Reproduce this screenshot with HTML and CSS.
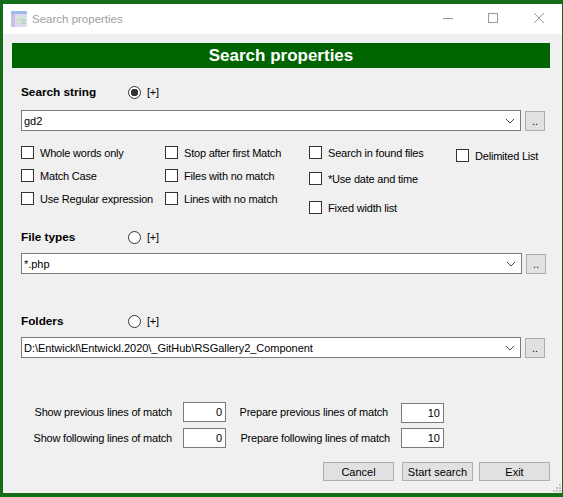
FILE: index.html
```html
<!DOCTYPE html>
<html lang="en">

<head>
    <meta charset="UTF-8">
    <meta name="viewport" content="width=device-width, initial-scale=1.0">
    <title>Search properties</title>
    <link rel="stylesheet" href="styles.css">
</head>

<body>
    <div class="window">
        <!-- Title bar -->
        <header class="titlebar">
            <svg class="app-icon" width="16" height="16" viewBox="0 0 16 16">
                <rect x="0" y="0" width="16" height="16" fill="#dedbf0" />
                <rect x="0" y="0" width="16" height="3" fill="#9dbde6" />
                <rect x="0" y="3" width="4" height="13" fill="#c6c2e6" />
                <rect x="5" y="5" width="10" height="2" fill="#d4e6d8" />
                <rect x="5" y="8" width="4" height="2" fill="#c4e0c4" />
                <rect x="10" y="8" width="5" height="2" fill="#b4dab8" />
                <rect x="5" y="11" width="4" height="2" fill="#cde5cd" />
                <rect x="10" y="11" width="5" height="2" fill="#b4dab8" />
            </svg>
            <span class="window-title">Search properties</span>
            <div class="window-controls">
                <svg class="ctl-min" width="10" height="10" viewBox="0 0 10 10"><path d="M0 5.5h10" stroke="#9a9a9a" fill="none" /></svg>
                <svg class="ctl-max" width="10" height="10" viewBox="0 0 10 10"><rect x=".5" y=".5" width="9" height="9" stroke="#9a9a9a" fill="none" /></svg>
                <svg width="10" height="10" viewBox="0 0 10 10"><path d="M0 0l10 10M10 0L0 10" stroke="#9a9a9a" fill="none" /></svg>
            </div>
        </header>

        <main class="form">
            <h1 class="banner">Search properties</h1>

            <!-- Search string -->
            <div class="section-head head-search">
                <span class="section-label">Search string</span>
                <span class="radio radio-on"></span>
                <span class="plus">[+]</span>
            </div>
            <div class="combo-row row-search">
                <div class="combo"><span>gd2</span><svg class="chevron" width="10" height="6" viewBox="0 0 10 6"><path d="M1 1l4 4 4-4" stroke="#444" fill="none" /></svg></div>
                <button class="dots" type="button">..</button>
            </div>

            <div class="options">
                <div class="option-col col-one">
                    <label class="check"><span class="box"></span>Whole words only</label>
                    <label class="check"><span class="box"></span>Match Case</label>
                    <label class="check"><span class="box"></span>Use Regular expression</label>
                </div>
                <div class="option-col col-two">
                    <label class="check"><span class="box"></span>Stop after first Match</label>
                    <label class="check"><span class="box"></span>Files with no match</label>
                    <label class="check"><span class="box"></span>Lines with no match</label>
                </div>
                <div class="option-col col-three">
                    <label class="check"><span class="box"></span>Search in found files</label>
                    <label class="check"><span class="box"></span>*Use date and time</label>
                    <label class="check"><span class="box"></span>Fixed width list</label>
                </div>
                <div class="option-col col-four">
                    <label class="check"><span class="box"></span>Delimited List</label>
                </div>
            </div>

            <!-- File types -->
            <div class="section-head head-types">
                <span class="section-label">File types</span>
                <span class="radio"></span>
                <span class="plus">[+]</span>
            </div>
            <div class="combo-row">
                <div class="combo combo-wide"><span>*.php</span><svg class="chevron" width="10" height="6" viewBox="0 0 10 6"><path d="M1 1l4 4 4-4" stroke="#444" fill="none" /></svg></div>
                <button class="dots" type="button">..</button>
            </div>

            <!-- Folders -->
            <div class="section-head head-folders">
                <span class="section-label">Folders</span>
                <span class="radio"></span>
                <span class="plus">[+]</span>
            </div>
            <div class="combo-row">
                <div class="combo"><span>D:\Entwickl\Entwickl.2020\_GitHub\RSGallery2_Component</span><svg class="chevron" width="10" height="6" viewBox="0 0 10 6"><path d="M1 1l4 4 4-4" stroke="#444" fill="none" /></svg></div>
                <button class="dots" type="button">..</button>
            </div>

            <!-- Context lines -->
            <div class="lines">
                <span class="line-label label-show">Show previous lines of match</span>
                <span class="num">0</span>
                <span class="line-label label-prev">Prepare previous lines of match</span>
                <span class="num num-low">10</span>
                <span class="line-label label-show">Show following lines of match</span>
                <span class="num">0</span>
                <span class="line-label label-next">Prepare following lines of match</span>
                <span class="num">10</span>
            </div>

            <div class="actions">
                <button class="action" type="button">Cancel</button>
                <button class="action" type="button">Start search</button>
                <button class="action" type="button">Exit</button>
            </div>
        </main>

        <svg class="grip" width="9" height="9" viewBox="0 0 9 9">
            <path d="M6 0h2v2H6zM3 3h2v2H3zM6 3h2v2H6zM0 6h2v2H0zM3 6h2v2H3zM6 6h2v2H6z" fill="#c4c4c4" />
        </svg>
    </div>
</body>

</html>
```

FILE: styles.css
```css
* {
    box-sizing: border-box;
}

body {
    margin: 0;
    font-family: "Liberation Sans", Arial, sans-serif;
    font-size: 11px;
    letter-spacing: -0.2px;
    color: #000;
    background-color: #136d17;
}

.window {
    position: relative;
    width: 563px;
    height: 497px;
    border-style: solid;
    border-color: #136d17;
    border-width: 4px 1px 4px 3px;
    background-color: #f0f0f0;
    overflow: hidden;
}

.titlebar {
    display: flex;
    align-items: center;
    height: 30px;
    padding-left: 8px;
    background-color: #fff;
}

.app-icon {
    margin-right: 5px;
}

.window-title {
    font-size: 11.5px;
    letter-spacing: 0;
    color: #a0a0a0;
}

.window-controls {
    display: flex;
    margin-left: auto;
    margin-right: 18px;
    margin-bottom: 2px;
}

.ctl-min {
    margin-right: 35px;
}

.ctl-max {
    margin-right: 36px;
}

.form {
    padding: 9px 12px 0 9px;
}

.banner {
    height: 25px;
    margin: 0;
    line-height: 25px;
    text-align: center;
    font-size: 17px;
    font-weight: bold;
    letter-spacing: 0;
    color: #fff;
    background-color: #006400;
}

.section-head {
    display: flex;
    align-items: center;
    height: 16px;
    padding-left: 9px;
}

.head-search {
    margin-top: 16px;
}

.head-types {
    margin-top: 15px;
}

.head-folders {
    margin-top: 39px;
}

.section-label {
    width: 107px;
    font-size: 11.8px;
    font-weight: bold;
    letter-spacing: -0.02px;
}

.radio {
    width: 13px;
    height: 13px;
    margin-right: 6px;
    border: 1px solid #333;
    border-radius: 50%;
    background-color: #fff;
}

.radio-on {
    background: radial-gradient(circle, #333 0 3.5px, #fff 4px);
}

.combo-row {
    display: flex;
    align-items: flex-start;
    margin-top: 8px;
    padding-left: 9px;
}

.row-search {
    margin-top: 10px;
}

.combo {
    display: flex;
    align-items: center;
    justify-content: space-between;
    width: 500px;
    height: 21px;
    padding: 0 5px 0 2px;
    letter-spacing: -0.04px;
    border: 1px solid #7a7a7a;
    background-color: #fff;
}

.combo-wide {
    width: 501px;
}

.dots {
    width: 20px;
    height: 20px;
    margin: 1px 0 0 4px;
    padding: 0;
    border: 1px solid #adadad;
    font: inherit;
    background-color: #e1e1e1;
}

.options {
    display: flex;
    margin-top: 15px;
    padding-left: 9px;
}

.option-col {
    display: flex;
    flex-direction: column;
}

.col-one,
.col-two {
    gap: 10px;
    width: 144px;
}

.col-three {
    gap: 13px;
    width: 147px;
}

.col-four {
    padding-top: 3px;
}

.check {
    display: flex;
    align-items: center;
    height: 13px;
    white-space: nowrap;
}

.col-three .check:nth-child(3) {
    margin-top: 3px;
}

.box {
    width: 13px;
    height: 13px;
    margin-right: 6px;
    border: 1px solid #333;
    background-color: #fff;
}

.lines {
    display: grid;
    grid-template-columns: 171px 43px 175px 43px;
    grid-auto-rows: 20px;
    row-gap: 6px;
    align-items: center;
    margin-top: 44px;
}

.line-label {
    text-align: right;
    white-space: nowrap;
}

.label-show,
.label-next {
    margin-right: 11px;
}

.label-prev {
    margin-right: 13px;
}

.num {
    height: 20px;
    padding-right: 3px;
    line-height: 18px;
    text-align: right;
    letter-spacing: 0;
    border: 1px solid #7a7a7a;
    background-color: #fff;
}

.num-low {
    align-self: start;
    margin-top: 1px;
}

.actions {
    display: flex;
    justify-content: flex-end;
    gap: 8px;
    margin-top: 14px;
}

.action {
    width: 71px;
    height: 19px;
    padding: 0;
    border: 1px solid #adadad;
    font: inherit;
    background-color: #e1e1e1;
}

.action:last-child {
    margin-left: -2px;
}

.grip {
    position: absolute;
    right: 0;
    bottom: 0;
}
```
